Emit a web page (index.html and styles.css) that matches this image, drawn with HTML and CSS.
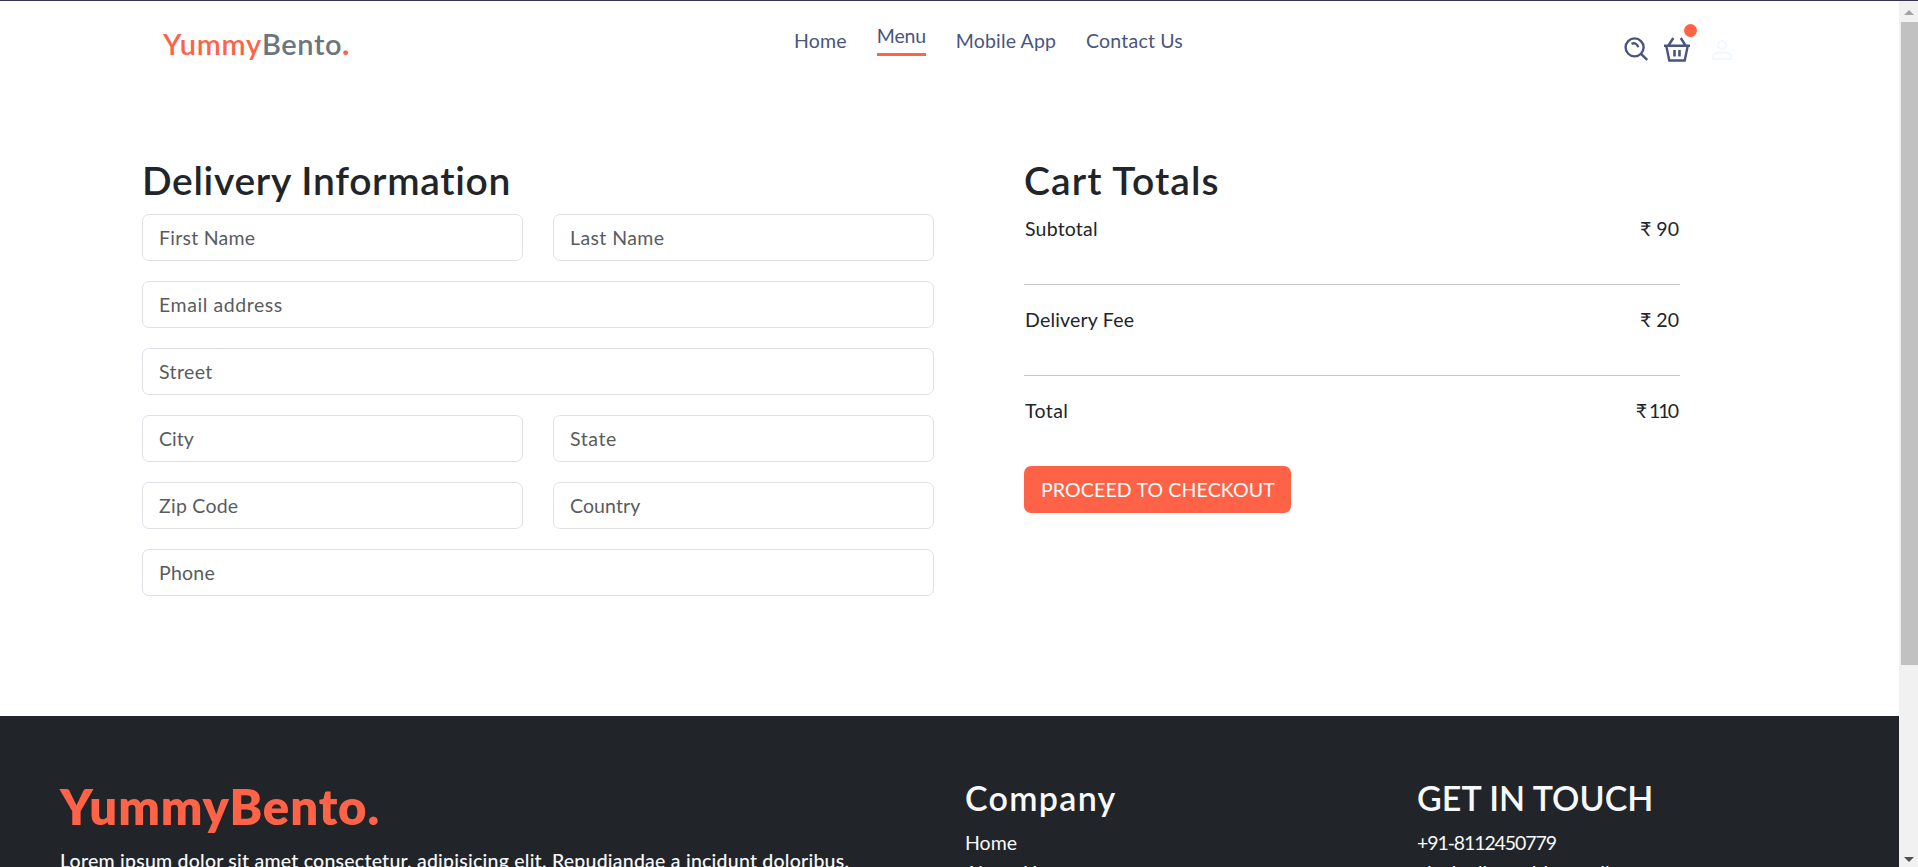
FILE: index.html
```html
<!DOCTYPE html>
<html lang="en">
<head>
<meta charset="utf-8">
<title>YummyBento</title>
<link rel="stylesheet" href="styles.css">
</head>
<body>
<div class="window">
  <div class="page">
    <header class="navbar">
      <div class="brand"><span class="brand-accent t-yummy">Yummy</span><span class="t-bento">Bento</span><b class="brand-accent">.</b></div>
      <nav class="links">
        <a class="t-home">Home</a><a class="active t-menu">Menu</a><a class="t-mobile">Mobile App</a><a class="t-contact">Contact Us</a>
      </nav>
      <div class="tools">
        <svg class="icon-search" viewBox="0 0 24 24" width="24" height="24" fill="none" stroke="#49557e" stroke-width="2.4"><circle cx="10.6" cy="10.4" r="9"/><path d="M17 16.8l6.2 6.2"/><path d="M7.500 6.800c3-1.300 6 0 6.700 3.400"/></svg>
        <div class="basket">
          <svg viewBox="0 0 26 25" width="26" height="25" fill="none" stroke="#49557e" stroke-width="2.400"><path d="M0 8.800H26M2.300 9l3 14.500H20.700L23.700 9M4.500 8.500L9.300 1M21.500 8.500L16.800 1"/><path d="M10.500 13v6.500M15.500 13v6.500" stroke-width="2.600"/></svg>
          <span class="dot"></span>
        </div>
        <svg class="icon-user" viewBox="0 0 20 20" width="20" height="20" fill="none" stroke="#f0f8ff" stroke-width="2"><circle cx="10" cy="5" r="4"/><path d="M1 19v-2.500C1 13.500 6 12.500 10 12.500s9 1 9 4V19z"/></svg>
      </div>
    </header>
    <main class="order">
      <form class="delivery">
        <h1 class="t-delivery">Delivery Information</h1>
        <div class="fields">
          <div class="field"><span class="t-first">First Name</span></div><div class="field"><span class="t-last">Last Name</span></div>
          <div class="field wide"><span class="t-email">Email address</span></div>
          <div class="field wide"><span class="t-street">Street</span></div>
          <div class="field"><span class="t-city">City</span></div><div class="field"><span class="t-state">State</span></div>
          <div class="field"><span class="t-zip">Zip Code</span></div><div class="field"><span class="t-country">Country</span></div>
          <div class="field wide"><span class="t-phone">Phone</span></div>
        </div>
      </form>
      <section class="totals">
        <h1 class="t-cart">Cart Totals</h1>
        <div class="row"><span class="t-subtotal">Subtotal</span><span class="t-90">₹ 90</span></div>
        <div class="row"><span class="t-fee">Delivery Fee</span><span class="t-20">₹ 20</span></div>
        <div class="row last"><span class="t-total">Total</span><span class="t-110">₹ 110</span></div>
        <button class="checkout" type="button"><span class="t-proceed">PROCEED TO CHECKOUT</span></button>
      </section>
    </main>
    <footer class="footer">
      <div class="about"><h2 class="t-flogo">YummyBento.</h2><p class="t-lorem">Lorem ipsum dolor sit amet consectetur, adipisicing elit. Repudiandae a incidunt doloribus,</p></div>
      <div class="company"><h3 class="t-company">Company</h3><ul><li>Home</li><li class="t-aboutus">About Us</li></ul></div>
      <div class="contact"><h3 class="t-touch">GET IN TOUCH</h3><ul><li class="t-tel">+91-8112450779</li><li class="t-mail">vivekedlaprudti@gmail.com</li></ul></div>
    </footer>
  </div>
  <div class="scrollbar"><i class="up"></i><div class="thumb"></div><i class="down"></i></div>
</div>
</body>
</html>
```
FILE: styles.css
```css
* { box-sizing: border-box; }
body { margin: 0; font: 400 19.500px/30px Lato, "Noto Sans", sans-serif; font-variant-ligatures: none; color: #212529; background: #fff; }
h1, h2, h3, p, ul { margin: 0; padding: 0; list-style: none; }
.window { display: flex; height: 867px; overflow: hidden; border-top: 1px solid #36364e; }
.page { flex: 1; min-width: 0; display: flex; flex-direction: column; overflow: hidden; }
.navbar { flex: none; height: 150px; padding: 0 166px 0 163px; display: grid; grid-template-columns: 631px 1fr 110px; align-items: start; }
.brand { padding-top: 23px; font-size: 29px; line-height: 40px; font-weight: 600; color: #6c757d; white-space: nowrap; }
.brand-accent { color: #ff6347; }
.links { display: flex; gap: 30px; padding-top: 25px; color: #49557e; white-space: nowrap; }
.links .active { margin-top: -5px; height: 35px; border-bottom: 3px solid #ff6347; }
.tools { display: flex; padding-top: 36px; }
.icon-search { margin: 0 16px 0 1px; }
.basket { position: relative; width: 26px; height: 25px; }
.dot { position: absolute; left: 20px; top: -13px; width: 13px; height: 13px; border-radius: 50%; background: #ff6347; }
.icon-user { margin: 3px 0 0 22px; }
.order { flex: none; height: 565px; padding: 7px 219px 0 142px; display: grid; grid-template-columns: 792px 656px; column-gap: 90px; }
h1 { font-size: 39px; line-height: 44px; font-weight: 600; white-space: nowrap; margin-bottom: 12px; }
.fields { display: grid; grid-template-columns: 1fr 1fr; gap: 20px 30px; }
.field { height: 47px; border: 1px solid #dee2e6; border-radius: 7px; padding: 8px 16px 0; color: #595c5f; white-space: nowrap; }
.wide { grid-column: span 2; }
.row { display: flex; justify-content: space-between; height: 71px; padding: 0 1px; border-bottom: 1px solid #c7c8c9; margin-bottom: 20px; }
.row.last { height: 70px; margin: 0; border: 0; }
.checkout { display: block; width: 267px; height: 47px; border: 0; border-radius: 7px; background: #ff6347; color: #fff; font: inherit; padding: 1px 17px 0; text-align: left; white-space: nowrap; }
.footer { flex: 1; background: #212529; color: #f8f9fa; padding: 60px 60px 0; display: grid; grid-template-columns: 905px 452px 1fr; white-space: nowrap; }
.about h2 { font-size: 49px; line-height: 60px; font-weight: 800; color: #ff6347; margin-bottom: 10px; }
.about p { font-weight: 500; }
.footer h3 { font-size: 34px; line-height: 43px; font-weight: 600; margin-bottom: 9px; }
.scrollbar { width: 19px; background: #f1f1f1; padding: 9px 0 5px 2px; display: flex; flex-direction: column; }
.thumb { height: 643px; background: #c1c1c1; margin: 7px 0 auto; }
.up, .down { align-self: center; margin-right: 1px; border: 5px solid transparent; border-top-width: 0; border-bottom: 5px solid #a3a3a3; }
.down { border-bottom-width: 0; border-top: 5px solid #505050; }

/* Tracking */
.t-yummy { letter-spacing: 0.75px; }
.t-bento { letter-spacing: 0.6px; }
.t-home { letter-spacing: 0.2px; }
.t-menu { letter-spacing: -0.2px; }
.t-mobile { letter-spacing: 0.15px; }
.t-contact { letter-spacing: 0.2px; }
.t-delivery { letter-spacing: 0.68px; }
.t-cart { letter-spacing: 1.12px; }
.t-first, .t-zip, .t-phone { letter-spacing: 0.25px; }
.t-last, .t-street, .t-total { letter-spacing: 0.4px; }
.t-email, .t-state { letter-spacing: 0.57px; }
.t-country { letter-spacing: 0.1px; }
.t-subtotal, .t-fee { letter-spacing: 0.2px; }
.t-110 { letter-spacing: -2px; word-spacing: 1px; margin-right: 2px; }
.t-proceed { letter-spacing: 0.15px; }
.t-flogo { letter-spacing: 0.9px; }
.t-lorem { letter-spacing: 0.23px; }
.t-company { letter-spacing: 1.3px; }
.t-touch { letter-spacing: 0.05px; }
.t-tel { letter-spacing: -1.1px; }
```
